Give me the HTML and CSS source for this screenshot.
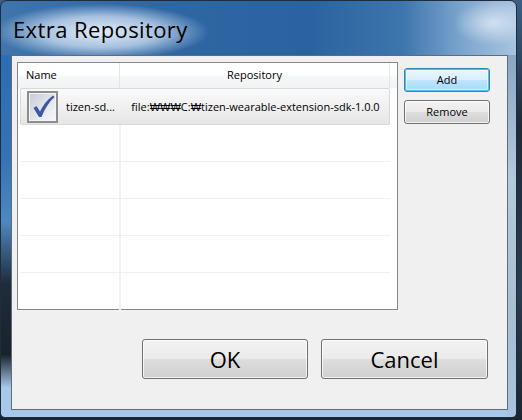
FILE: index.html
```html
<!DOCTYPE html>
<html>
<head>
<meta charset="utf-8">
<link rel="stylesheet" href="styles.css">
</head>
<body>
<div class="win">
  <div class="title">Extra Repository</div>
  <div class="client">
    <div class="top">
      <div class="table">
        <div class="thead">
          <div class="th name">Name</div>
          <div class="th repo">Repository</div>
          <div class="th fill"></div>
        </div>
        <div class="tbody">
          <div class="row sel">
            <div class="cell name">
              <svg class="chk" width="31" height="32" viewBox="0 0 31 32">
                <defs>
                  <linearGradient id="cg" x1="0" y1="0" x2="1" y2="1">
                    <stop offset="0" stop-color="#c3cbd6"/>
                    <stop offset="0.6" stop-color="#e6e9ee"/>
                    <stop offset="1" stop-color="#fbfbfb"/>
                  </linearGradient>
                </defs>
                <rect x="1" y="1" width="29" height="30" fill="url(#cg)" stroke="#8d8d8d" stroke-width="2"/>
                <rect x="2.5" y="2.5" width="26" height="27" fill="none" stroke="#f4f4f4" stroke-width="1"/>
                <path d="M6.5 17 L9.5 15 L13 20.5 C16 14 20 9 26 4.5 L27.5 6 C22 11 17.5 18 14.5 26 L12 26 Z" fill="#3d57a3"/>
              </svg>
              <span class="ntext">tizen-sd...</span>
            </div>
            <div class="sep"></div>
            <div class="cell repo">file:₩₩₩C:₩tizen-wearable-extension-sdk-1.0.0</div>
          </div>
          <div class="row"><div class="cell name"></div><div class="sep"></div><div class="cell repo"></div></div>
          <div class="row"><div class="cell name"></div><div class="sep"></div><div class="cell repo"></div></div>
          <div class="row"><div class="cell name"></div><div class="sep"></div><div class="cell repo"></div></div>
          <div class="row"><div class="cell name"></div><div class="sep"></div><div class="cell repo"></div></div>
          <div class="row last"><div class="cell name"></div><div class="sep"></div><div class="cell repo"></div></div>
        </div>
      </div>
      <div class="side">
        <button class="btn small def">Add</button>
        <button class="btn small">Remove</button>
      </div>
    </div>
    <div class="bottom">
      <button class="btn big ok">OK</button>
      <button class="btn big cancel">Cancel</button>
    </div>
  </div>
</div>
</body>
</html>
```

FILE: styles.css
```css
html, body {
  margin: 0;
  padding: 0;
}
body {
  width: 522px;
  height: 420px;
  overflow: hidden;
  background: linear-gradient(180deg, #3b5f86 0%, #1d2a38 30%, #2a3c50 70%, #1b2531 100%);
  font-family: "Open Sans", "Liberation Sans", sans-serif;
}
.win {
  box-sizing: border-box;
  width: 517px;
  height: 418px;
  border: 1px solid #1e2c3b;
  border-radius: 7px 7px 5px 5px;
  padding: 0 9px 7px 10px;
  display: flex;
  flex-direction: column;
  background:
    radial-gradient(ellipse 108px 28px at 100px 31px, rgba(236, 242, 250, 0.95) 0%, rgba(205, 222, 242, 0.75) 55%, rgba(160, 190, 225, 0) 100%),
    radial-gradient(ellipse 40px 22px at 492px 22px, rgba(235, 242, 250, 0.7), rgba(235, 242, 250, 0)),
    linear-gradient(180deg, #2c6db3 0%, #3473b4 25%, #4f88c0 40%, #1f2c3b 55%, #1a222c 72%, #a7c9ea 80%, #a9cbeb 100%) left 0 top 54px / 10px 100% no-repeat,
    linear-gradient(180deg, #8aa8c4 0%, #b4c9dc 30%, #a9bfd3 60%, #a6c6e4 100%) right 0 top 54px / 9px 100% no-repeat,
    linear-gradient(180deg, #a5c7e8, #a9cbea) left 0 bottom 0 / 100% 8px no-repeat,
    linear-gradient(90deg, #3f74ad 0%, #2f67a3 30%, #2a63a0 60%, #3e75ad 78%, #7ea7cf 90%, #a8c4df 100%);
}
.title {
  box-sizing: border-box;
  height: 54px;
  padding: 13px 0 0 2px;
  font-size: 22px;
  line-height: 30px;
  color: #000;
  letter-spacing: 0.4px;
}
.client {
  box-sizing: border-box;
  width: 497px;
  height: 355px;
  border: 1px solid #5e6c7b;
  background: #f0f0f0;
  padding: 6px 17px 0 5px;
  display: flex;
  flex-direction: column;
}
.top {
  display: flex;
  gap: 6px;
  height: 248px;
}
.table {
  box-sizing: border-box;
  flex: none;
  width: 381px;
  height: 248px;
  border: 1px solid #828790;
  background: #fff;
  display: flex;
  flex-direction: column;
}
.thead {
  display: flex;
  height: 25px;
  background: linear-gradient(180deg, #ffffff 0%, #ffffff 45%, #f6f7f9 55%, #f2f3f5 100%);
  font-size: 11px;
  color: #000;
}
.th {
  box-sizing: border-box;
  height: 25px;
  line-height: 24px;
}
.th.name {
  width: 102px;
  padding-left: 8px;
  border-right: 1px solid #e3e5e8;
}
.th.repo {
  width: 270px;
  text-align: center;
  border-right: 1px solid #e3e5e8;
}
.th.fill {
  flex: 1;
}
.tbody {
  flex: 1;
  padding-left: 2px;
}
.row {
  box-sizing: border-box;
  width: 370px;
  height: 37px;
  display: flex;
  border-bottom: 1px solid #f0f0f0;
}
.row.last {
  border-bottom: none;
}
.cell {
  box-sizing: border-box;
  height: 36px;
  font-size: 11px;
  color: #000;
  display: flex;
  align-items: center;
}
.cell.name {
  width: 99px;
  padding-left: 7px;
}
.sep {
  width: 2px;
  background: #f0f0f0;
}
.cell.repo {
  flex: 1;
  justify-content: center;
}
.row.sel {
  border: 1px solid #d9d9d9;
  border-radius: 2px;
  background: linear-gradient(180deg, #fafafa 0%, #f0f0f0 50%, #e6e6e6 100%);
}
.row.sel .sep {
  background: transparent;
}
.row.sel .cell {
  height: 35px;
}
.row.sel .cell.name {
  padding-left: 6px;
}
.chk {
  display: block;
  flex: none;
}
.ntext {
  margin-left: 8px;
}
.side {
  flex: none;
  width: 86px;
  display: flex;
  flex-direction: column;
  gap: 8px;
  padding-top: 6px;
}
.btn {
  box-sizing: border-box;
  margin: 0;
  padding: 0;
  border: 1px solid #707070;
  border-radius: 3px;
  font-family: "Open Sans", "Liberation Sans", sans-serif;
  color: #000;
  background: linear-gradient(180deg, #f2f2f2 0%, #ebebeb 48%, #dddddd 52%, #cfcfcf 100%);
  box-shadow: inset 0 0 0 1px rgba(255, 255, 255, 0.75);
}
.btn.small {
  width: 86px;
  height: 24px;
  font-size: 11px;
  line-height: 20px;
}
.btn.def {
  border-color: #3c7fb1;
  background: linear-gradient(180deg, #eaf6fd 0%, #d9f0fc 48%, #bee6fd 52%, #a7d9f5 100%);
  box-shadow: inset 0 0 0 1px #48c3f0, inset 0 0 0 2px rgba(255, 255, 255, 0.5);
}
.bottom {
  display: flex;
  justify-content: flex-end;
  gap: 13px;
  margin-top: 29px;
  padding-right: 2px;
}
.btn.big {
  height: 40px;
  font-size: 22px;
  line-height: 36px;
}
.btn.ok {
  width: 166px;
}
.btn.cancel {
  width: 167px;
}
```
